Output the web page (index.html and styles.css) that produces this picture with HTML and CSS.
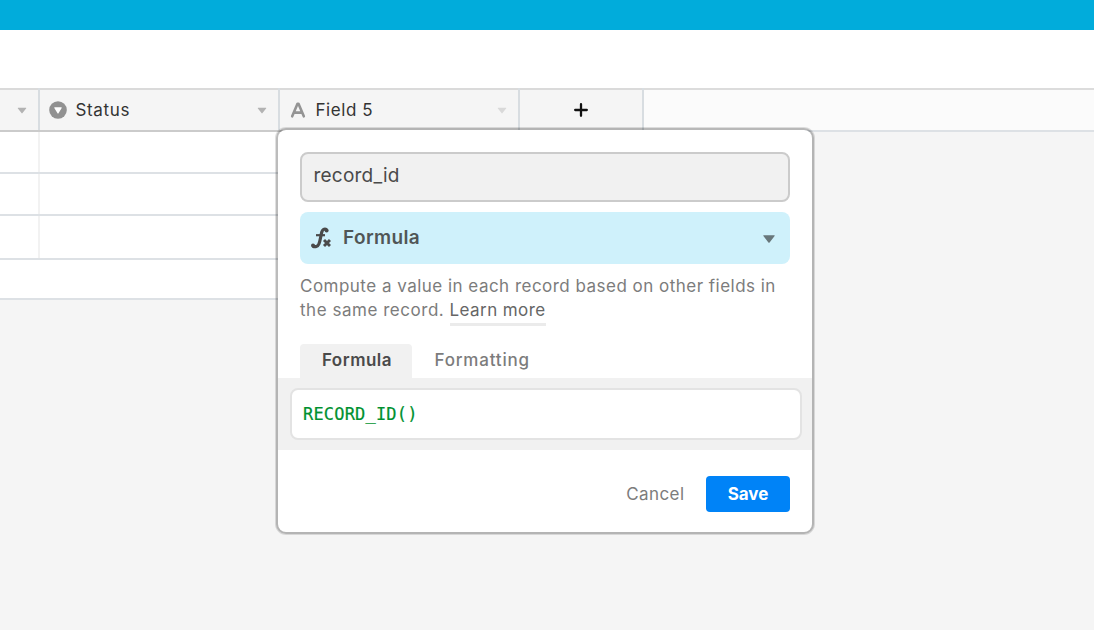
FILE: index.html
```html
<!DOCTYPE html>
<html lang="en">
<head>
<meta charset="utf-8">
<title>Formula field</title>
<link rel="stylesheet" href="styles.css">
</head>
<body>
<div class="app">
  <div class="topbar"></div>
  <div class="toolbar"></div>
  <div class="header">
    <div class="columns">
      <div class="col col-cut"><svg class="caret" width="10" height="7" viewBox="0 0 10 7"><path d="M1.2.7h7.6c.4 0 .6.4.3.8L5.5 6.1a.6.6 0 0 1-1 0L.9 1.5C.6 1.100.8.7 1.2.7z"/></svg></div>
      <div class="col">
        <svg class="icon" width="18" height="18" viewBox="0 0 18 18"><circle cx="9" cy="9" r="8.800" fill="#919191"/><path d="M5.700 6.300h6.600c.4 0 .6.400.4.700L9.500 12.300a.6.6 0 0 1-1 0L5.300 7c-.2-.3 0-.7.4-.7z" fill="#fff"/></svg>
        <span class="label status">Status</span>
        <svg class="caret" width="10" height="7" viewBox="0 0 10 7"><path d="M1.2.7h7.6c.4 0 .6.4.3.8L5.5 6.1a.6.6 0 0 1-1 0L.9 1.5C.6 1.100.8.7 1.2.7z"/></svg>
      </div>
      <div class="col">
        <svg class="icon" width="18" height="18" viewBox="0 0 18 18"><path d="M3.200 15.300L8.500 2.700h1L14.800 15.300M5 11.600h8" fill="none" stroke="#949494" stroke-width="2.600" stroke-linecap="round" stroke-linejoin="round"/></svg>
        <span class="label field">Field 5</span>
        <svg class="caret faint" width="10" height="7" viewBox="0 0 10 7"><path d="M1.2.7h7.6c.4 0 .6.4.3.8L5.5 6.1a.6.6 0 0 1-1 0L.9 1.5C.6 1.100.8.7 1.2.7z"/></svg>
      </div>
      <div class="col col-add"><svg width="14" height="14" viewBox="0 0 14 14"><path d="M7 1.200v11.600M1.200 7h11.600" stroke="#111" stroke-width="2.300" stroke-linecap="round"/></svg></div>
    </div>
  </div>
  <div class="rows">
    <div class="row"></div>
    <div class="row"></div>
    <div class="row row-tall"></div>
    <div class="row row-new"></div>
  </div>
  <div class="dialog">
    <div class="top">
      <div class="name">record_id</div>
      <div class="type">
        <svg class="fx" width="20" height="22" viewBox="0 0 20 22"><path d="M15.800 2.600C13.300 1.300 11.500 2.500 10.800 5 9.800 8.500 9.300 13.600 7.900 17c-1 2.600-3.900 3.300-6.100 2" fill="none" stroke="#4a4a4a" stroke-width="3.200"/><circle cx="15.600" cy="3.500" r="2"/><circle cx="2" cy="18.500" r="2"/><path d="M5 8.200h9" fill="none" stroke="#4a4a4a" stroke-width="2.200"/><path d="M13 13l6 6M19 13l-6 6" fill="none" stroke="#4a4a4a" stroke-width="2.900"/></svg>
        <span class="type-label">Formula</span>
        <svg class="type-caret" width="12" height="8" viewBox="0 0 12 8"><path d="M.8.2h10.400c.6 0 .8.500.4.900L6.600 7.500a.8.8 0 0 1-1.200 0L.4 1.100C0 .7.2.2.8.2z"/></svg>
      </div>
      <div class="desc"><span class="line1">Compute a value in each record based on other fields in</span><br><span class="line2">the same record. </span><span class="more">Learn more</span></div>
      <div class="tabs"><div class="tab active">Formula</div><div class="tab other">Formatting</div></div>
    </div>
    <div class="editor"><div class="code">RECORD_ID()</div></div>
    <div class="actions"><span class="cancel">Cancel</span><div class="save"><span>Save</span></div></div>
  </div>
</div>
</body>
</html>
```
FILE: styles.css
```css
* { box-sizing: border-box; }
body { margin: 0; font-family: Inter, "Liberation Sans", sans-serif; }
svg { display: block; flex: none; }
.app { position: relative; width: 1094px; height: 630px; overflow: hidden; background: #f5f5f5; }
.topbar { height: 30px; background: #01acdb; }
.toolbar { height: 58px; background: #fff; }
.header { height: 44px; border-bottom: 2px solid #dde1e5; background: #fbfbfb; box-shadow: inset 0 2px #dcdcdc; }
.columns { display: flex; width: 644px; height: 44px; background: #f5f5f5; border-bottom: 2px solid #cbcbcb; box-shadow: inset 0 2px #dadada; }
.col { display: flex; align-items: center; width: 240px; padding: 2px 11px 0 9px; border-right: 2px solid #d8dde1; }
.col-cut { width: 40px; justify-content: flex-end; }
.col-add { width: 124px; justify-content: center; padding: 2px 0 0; }
.icon { margin-right: 8.5px; }
.label { font-size: 17px; line-height: 24px; color: #333; white-space: nowrap; }
.caret { margin-left: auto; fill: #b3b3b3; }
.faint { fill: #d9d9d9; }
.status { letter-spacing: .65px; }
.field { letter-spacing: .55px; }
.rows { width: 300px; background: #fff; }
.row { height: 42px; border-bottom: 2px solid #dde1e5; background: linear-gradient(#f2f2f2, #f2f2f2) 38px 0 / 2px 100% no-repeat; }
.row-tall { height: 44px; }
.row-new { height: 40px; background: none; }
.dialog { position: absolute; left: 278px; top: 130px; width: 534px; height: 402px; border-radius: 8px; background: #fff; box-shadow: 0 0 0 2px rgba(0,0,0,.16), 0 0 0 3px rgba(0,0,0,.12); }
.top { height: 248px; padding: 22px 22px 0; }
.name { height: 50px; border: 2px solid #cbcbcb; border-radius: 8px; background: #f1f1f1; padding: 10px 11.5px; font-size: 19px; line-height: 24px; color: #4a4a4a; letter-spacing: .22px; }
.type { display: flex; align-items: center; height: 52px; margin-top: 10px; padding: 0 15px 0 11px; border-radius: 8px; background: #cff1fb; }
.fx { fill: #4a4a4a; margin-right: 12px; }
.type-label { margin-bottom: 2px; font-size: 19px; font-weight: 600; color: #505656; letter-spacing: .38px; }
.type-caret { margin: 2px 0 0 auto; fill: #68777b; }
.desc { margin-top: 10px; height: 58px; font-size: 17px; line-height: 24px; color: #7c7c7c; white-space: pre; }
.line1 { letter-spacing: .48px; }
.line2 { letter-spacing: .53px; }
.more { display: inline-block; height: 28px; line-height: 24px; border-bottom: 3px solid #ebebeb; color: #666; letter-spacing: .42px; }
.tabs { display: flex; margin-top: 12px; font-size: 17px; line-height: 32px; font-weight: 500; }
.tab { height: 34px; white-space: nowrap; }
.active { width: 112px; padding-left: 2px; text-align: center; background: #f1f1f1; border-radius: 4px 4px 0 0; color: #4a4a4a; font-weight: 600; letter-spacing: .5px; }
.other { margin-left: 22.5px; color: #7c7c7c; letter-spacing: .8px; }
.editor { height: 72px; padding: 10px 10px 10px 12px; background: #f1f1f1; }
.code { height: 52px; border: 2px solid #e3e3e3; border-radius: 8px; background: #fff; padding: 12px 11px; font: 17px/24px "DejaVu Sans Mono", monospace; letter-spacing: .18px; color: #009130; -webkit-text-stroke: .2px #009130; }
.actions { display: flex; align-items: center; justify-content: flex-end; height: 82px; padding: 6px 22px 0 0; font-size: 17px; }
.cancel { color: #7c7c7c; letter-spacing: .4px; margin-right: 21.6px; }
.save { width: 84px; height: 36px; line-height: 36px; border-radius: 4px; background: #0083f7; color: #fff; font-weight: 700; text-align: center; }
```
